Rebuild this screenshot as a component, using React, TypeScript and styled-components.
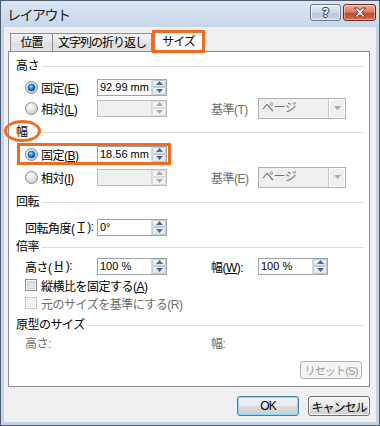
import React from "react";
import styled, { createGlobalStyle } from "styled-components";

const ORANGE = "#f26b22";

const Key = styled.span`
  text-decoration: underline;
`;

function Radio({ checked }: { checked?: boolean }) {
  return (
    <svg width="13" height="13" viewBox="0 0 13 13">
      <defs>
        <radialGradient id="rbg" cx="40%" cy="35%" r="70%">
          <stop offset="0" stopColor="#ffffff" />
          <stop offset="1" stopColor="#c9c9c9" />
        </radialGradient>
        <radialGradient id="rdot" cx="40%" cy="35%" r="70%">
          <stop offset="0" stopColor="#8fe0ff" />
          <stop offset="0.5" stopColor="#1e8ad8" />
          <stop offset="1" stopColor="#0b3f88" />
        </radialGradient>
      </defs>
      <circle cx="6.5" cy="6.5" r="6" fill="url(#rbg)" stroke="#8c8c8c" />
      {checked && <circle cx="6.5" cy="6.5" r="3.6" fill="url(#rdot)" stroke="#1b4f86" strokeWidth="0.6" />}
    </svg>
  );
}

function Arrow({ up, disabled }: { up?: boolean; disabled?: boolean }) {
  return (
    <svg width="7" height="4" viewBox="0 0 7 4">
      <path d={up ? "M0 4 L3.5 0 L7 4 Z" : "M0 0 L3.5 4 L7 0 Z"} fill={disabled ? "#a9a9a9" : "#4b6a96"} />
    </svg>
  );
}

function Spin({ value, disabled }: { value?: string; disabled?: boolean }) {
  return (
    <SpinBox $disabled={disabled}>
      <SpinValue>{value}</SpinValue>
      <SpinButtons>
        <SpinButton $disabled={disabled}>
          <Arrow up disabled={disabled} />
        </SpinButton>
        <SpinButton $disabled={disabled}>
          <Arrow disabled={disabled} />
        </SpinButton>
      </SpinButtons>
    </SpinBox>
  );
}

function Combo() {
  return (
    <ComboBox>
      <ComboText>ページ</ComboText>
      <ComboButton>
        <Arrow disabled />
      </ComboButton>
    </ComboBox>
  );
}

export default function App() {
  return (
    <>
      <GlobalStyle />
      <Window>
        <TitleBar>
          <TitleText>レイアウト</TitleText>
          <Caption>
            <HelpButton>?</HelpButton>
            <CloseButton>
              <svg width="14" height="11" viewBox="0 0 14 11">
                <path
                  d="M1.5 1 L4.5 1 L7 3.6 L9.5 1 L12.5 1 L8.6 5.5 L12.5 10 L9.5 10 L7 7.4 L4.5 10 L1.5 10 L5.4 5.5 Z"
                  fill="#fff"
                  stroke="#5a1a10"
                  strokeWidth="0.8"
                />
              </svg>
            </CloseButton>
          </Caption>
        </TitleBar>
        <Body>
          <TabStrip>
            <Tab $w={43}>位置</Tab>
            <Tab $w={100} $ml={-1}>文字列の折り返し</Tab>
            <ActiveTab>サイズ</ActiveTab>
          </TabStrip>
          <Panel>
            <SectionTitle $mt={7}>
              <span>高さ</span>
              <Rule />
            </SectionTitle>
            <Row $mt={4}>
              <LeftCell>
                <Radio checked />
                <span>
                  固定(<Key>E</Key>)
                </span>
              </LeftCell>
              <Spin value="92.99 mm" />
            </Row>
            <Row $mt={1}>
              <LeftCell>
                <Radio />
                <span>
                  相対(<Key>L</Key>)
                </span>
              </LeftCell>
              <Spin disabled />
              <RightLabel $disabled>基準(T)</RightLabel>
              <Combo />
            </Row>

            <SectionTitle $mt={7}>
              <Circled>
                幅
                <Ellipse />
              </Circled>
              <Rule />
            </SectionTitle>
            <Row $mt={5}>
              <Highlight />
              <LeftCell>
                <Radio checked />
                <span>
                  固定(<Key>B</Key>)
                </span>
              </LeftCell>
              <Spin value="18.56 mm" />
            </Row>
            <Row $mt={3}>
              <LeftCell>
                <Radio />
                <span>
                  相対(<Key>I</Key>)
                </span>
              </LeftCell>
              <Spin disabled />
              <RightLabel $disabled>基準(E)</RightLabel>
              <Combo />
            </Row>

            <SectionTitle $mt={8}>
              <span>回転</span>
              <Rule />
            </SectionTitle>
            <Row $mt={8}>
              <LeftCell>
                回転角度(<Key>T</Key>):
              </LeftCell>
              <Spin value="0°" />
            </Row>

            <SectionTitle $mt={3}>
              <span>倍率</span>
              <Rule />
            </SectionTitle>
            <Row $mt={2}>
              <LeftCell>
                高さ(<Key>H</Key>):
              </LeftCell>
              <Spin value="100 %" />
              <RightLabel>
                幅(<Key>W</Key>):
              </RightLabel>
              <Spin value="100 %" />
            </Row>
            <CheckRow>
              <CheckBox />
              <span>
                縦横比を固定する(<Key>A</Key>)
              </span>
            </CheckRow>
            <CheckRow $disabled>
              <CheckBox $disabled />
              <span>元のサイズを基準にする(R)</span>
            </CheckRow>

            <SectionTitle $mt={6}>
              <span>原型のサイズ</span>
              <Rule />
            </SectionTitle>
            <InfoRow>
              <span>高さ:</span>
              <span>幅:</span>
            </InfoRow>
            <ResetRow>
              <ResetButton>リセット(S)</ResetButton>
            </ResetRow>
          </Panel>
          <ButtonRow>
            <DialogButton $primary>OK</DialogButton>
            <DialogButton>キャンセル</DialogButton>
          </ButtonRow>
        </Body>
      </Window>
    </>
  );
}

const GlobalStyle = createGlobalStyle`
  html, body {
    margin: 0;
    padding: 0;
  }
  body {
    width: 380px;
    height: 426px;
    overflow: hidden;
    font-family: "Liberation Sans", "Noto Sans CJK JP", sans-serif;
    font-size: 12px;
    letter-spacing: -0.5px;
    color: #000;
  }
  * {
    box-sizing: border-box;
  }
`;

const Window = styled.div`
  width: 380px;
  height: 426px;
  border: 1px solid #4f5d6e;
  background: #c4d5ea;
  display: flex;
  flex-direction: column;
`;

const TitleBar = styled.div`
  height: 26px;
  flex: none;
  display: flex;
  align-items: flex-start;
  padding: 0 3px 0 6px;
  background: linear-gradient(#dbe6f3, #c6d6ea);
`;

const TitleText = styled.div`
  font-family: "Noto Sans CJK JP", sans-serif;
  font-size: 14px;
  line-height: 26px;
  letter-spacing: -1.5px;
  color: #1a1a1a;
`;

const Caption = styled.div`
  margin-left: auto;
  margin-top: 3px;
  display: flex;
  gap: 2px;
`;

const HelpButton = styled.div`
  width: 31px;
  height: 17px;
  border: 1px solid #6b7a8e;
  border-radius: 3px;
  background: linear-gradient(#e6eef7, #cbd7e5 50%, #b7c6d8 51%, #c9d6e6);
  box-shadow: inset 0 0 0 1px rgba(255, 255, 255, 0.6);
  display: flex;
  align-items: center;
  justify-content: center;
  font-family: "DejaVu Sans", sans-serif;
  font-weight: bold;
  font-size: 12px;
  color: #fff;
  text-shadow: 0 0 1px #223, 1px 0 0 #334, -1px 0 0 #334, 0 1px 0 #334, 0 -1px 0 #334;
`;

const CloseButton = styled.div`
  width: 33px;
  height: 17px;
  border: 1px solid #6b2a1f;
  border-radius: 3px;
  background: linear-gradient(#eab0a3, #d7735f 50%, #c34128 51%, #d8704f);
  box-shadow: inset 0 0 0 1px rgba(255, 255, 255, 0.4);
  display: flex;
  align-items: center;
  justify-content: center;
`;

const Body = styled.div`
  flex: 1;
  margin: 0 3px 3px 3px;
  background: #f0f0f0;
  padding: 0 6px 0 4px;
  display: flex;
  flex-direction: column;
`;

const TabStrip = styled.div`
  height: 24px;
  flex: none;
  padding: 3px 0 0 2px;
  display: flex;
  align-items: flex-end;
`;

const Tab = styled.div<{ $w: number; $ml?: number }>`
  width: ${(p) => p.$w}px;
  margin-left: ${(p) => p.$ml ?? 0}px;
  height: 18px;
  border: 1px solid #898c95;
  border-bottom: none;
  background: linear-gradient(#f5f5f5, #e6e6e6 50%, #dddddd 51%, #e4e4e4);
  display: flex;
  align-items: center;
  justify-content: center;
  letter-spacing: -1px;
  line-height: 16px;
`;

const ActiveTab = styled.div`
  position: relative;
  z-index: 2;
  width: 53px;
  height: 23px;
  margin-bottom: -2px;
  border: 3px solid ${ORANGE};
  background: #fff;
  display: flex;
  align-items: center;
  justify-content: center;
  letter-spacing: -1px;
  padding-bottom: 2px;
`;

const Panel = styled.div`
  position: relative;
  width: 362px;
  border: 1px solid #898c95;
  background: #fff;
  padding: 0 5px 7px 7px;
  display: flex;
  flex-direction: column;
`;

const SectionTitle = styled.div<{ $mt: number }>`
  margin-top: ${(p) => p.$mt}px;
  height: 14px;
  line-height: 14px;
  display: flex;
  align-items: center;
  gap: 3px;
  white-space: nowrap;
`;

const Rule = styled.div`
  flex: 1;
  height: 1px;
  background: #d5dfe5;
`;

const Circled = styled.span`
  position: relative;
`;

const Ellipse = styled.span`
  position: absolute;
  left: -12px;
  top: -5px;
  width: 37px;
  height: 22px;
  border: 3px solid ${ORANGE};
  border-radius: 50%;
  z-index: 3;
`;

const Row = styled.div<{ $mt: number }>`
  position: relative;
  margin-top: ${(p) => p.$mt}px;
  height: 20px;
  padding-left: 9px;
  display: flex;
  align-items: center;
  white-space: nowrap;
`;

const Highlight = styled.div`
  position: absolute;
  left: 1px;
  top: -1px;
  width: 154px;
  height: 22px;
  border: 3px solid ${ORANGE};
`;

const LeftCell = styled.div`
  width: 72px;
  flex: none;
  display: flex;
  align-items: center;
  gap: 3px;
`;

const RightLabel = styled.div<{ $disabled?: boolean }>`
  width: 47px;
  margin-left: 44px;
  flex: none;
  color: ${(p) => (p.$disabled ? "#6d6d6d" : "#000")};
`;

const SpinBox = styled.div<{ $disabled?: boolean }>`
  width: 70px;
  height: 17px;
  flex: none;
  display: flex;
  border: 1px solid ${(p) => (p.$disabled ? "#b8bcc0" : "#9fa4aa")};
  background: ${(p) => (p.$disabled ? "#f0f0f0" : "#fff")};
`;

const SpinValue = styled.div`
  flex: 1;
  padding-left: 2px;
  line-height: 15px;
  font-size: 11px;
  letter-spacing: 0;
  overflow: hidden;
`;

const SpinButtons = styled.div`
  width: 15px;
  display: flex;
  flex-direction: column;
  border-left: 1px solid #d6d9dd;
`;

const SpinButton = styled.div<{ $disabled?: boolean }>`
  flex: 1;
  display: flex;
  align-items: center;
  justify-content: center;
  border: 1px solid ${(p) => (p.$disabled ? "#dcdcdc" : "#c3c9d1")};
  border-radius: 1px;
  background: ${(p) =>
    p.$disabled ? "#f4f4f4" : "linear-gradient(#f6f8fb, #dfe5ee)"};
`;

const ComboBox = styled.div`
  width: 88px;
  height: 21px;
  flex: none;
  display: flex;
  border: 1px solid #adb2b5;
  background: #f0f0f0;
`;

const ComboText = styled.div`
  flex: 1;
  padding-left: 3px;
  line-height: 19px;
  color: #6d6d6d;
`;

const ComboButton = styled.div`
  width: 17px;
  display: flex;
  align-items: center;
  justify-content: center;
  border-left: 1px solid #c8c8c8;
  box-shadow: inset 1px 1px 0 #fff, inset -1px -1px 0 #fff;
  background: #efefef;
`;

const CheckRow = styled.div<{ $disabled?: boolean }>`
  height: 18px;
  padding-left: 9px;
  display: flex;
  align-items: center;
  gap: 4px;
  white-space: nowrap;
  color: ${(p) => (p.$disabled ? "#6d6d6d" : "#000")};
`;

const CheckBox = styled.div<{ $disabled?: boolean }>`
  width: 12px;
  height: 12px;
  border: 1px solid ${(p) => (p.$disabled ? "#c6c6c6" : "#8e8f8f")};
  background: ${(p) =>
    p.$disabled ? "#f4f4f4" : "linear-gradient(135deg, #cbcfd5, #f6f6f6)"};
  box-shadow: inset 0 0 0 1px ${(p) => (p.$disabled ? "#fafafa" : "#f4f4f4")},
    inset 0 0 0 2px ${(p) => (p.$disabled ? "#f0f0f0" : "#d2d4d8")};
`;

const InfoRow = styled.div`
  margin-top: 2px;
  height: 16px;
  padding-left: 9px;
  display: grid;
  grid-template-columns: 186px auto;
  align-items: center;
  color: #6d6d6d;
`;

const ResetRow = styled.div`
  margin-top: 11px;
  display: flex;
  justify-content: flex-end;
  padding-right: 2px;
`;

const ResetButton = styled.div`
  width: 62px;
  height: 18px;
  border: 1px solid #adb2b5;
  border-radius: 3px;
  background: #f4f4f4;
  color: #9a9a9a;
  display: flex;
  align-items: center;
  justify-content: center;
  white-space: nowrap;
  font-size: 11px;
  letter-spacing: -0.8px;
`;

const ButtonRow = styled.div`
  margin-top: 9px;
  display: flex;
  justify-content: flex-end;
  gap: 9px;
`;

const DialogButton = styled.div<{ $primary?: boolean }>`
  width: 62px;
  height: 20px;
  border: 1px solid ${(p) => (p.$primary ? "#3c7fb1" : "#707070")};
  border-radius: 3px;
  background: linear-gradient(#f2f2f2, #ebebeb 50%, #dddddd 51%, #cfcfcf);
  box-shadow: inset 0 0 0 1px ${(p) => (p.$primary ? "#8fd8f5" : "#fcfcfc")};
  display: flex;
  align-items: center;
  justify-content: center;
  white-space: nowrap;
  letter-spacing: -1px;
`;
